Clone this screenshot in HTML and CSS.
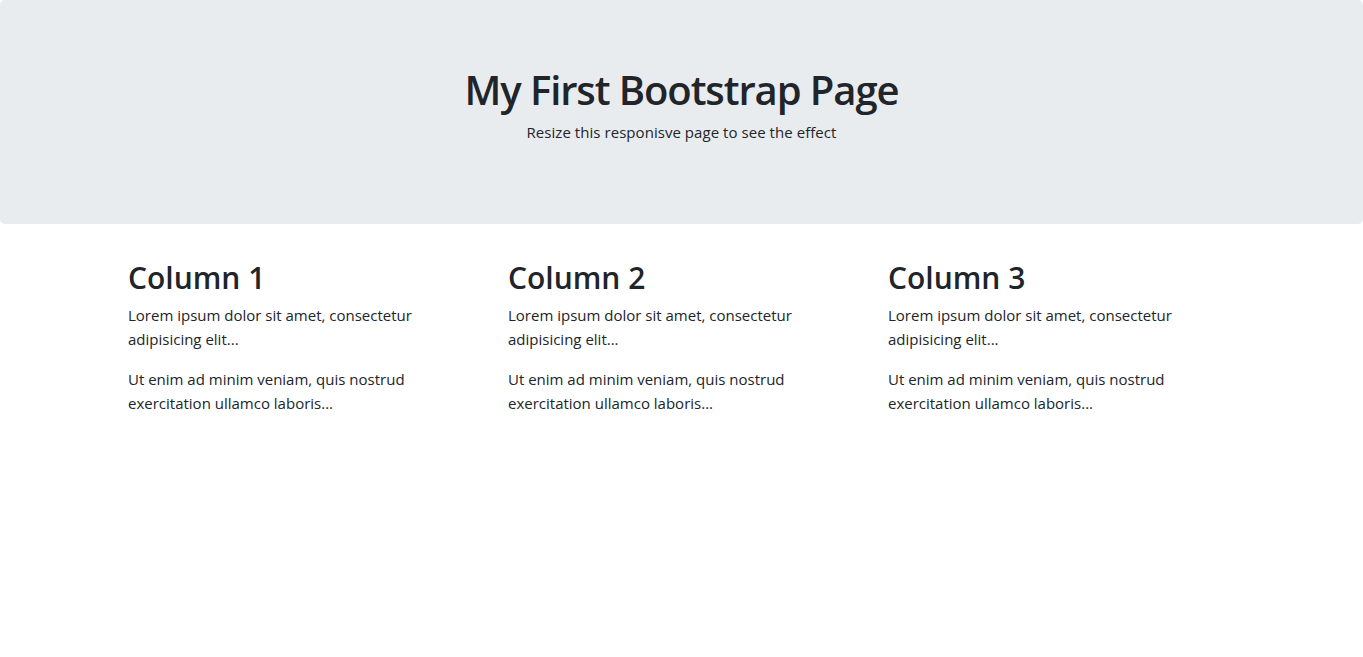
FILE: index.html
```html
<!DOCTYPE html>
<html lang="en">
<head>
<meta charset="utf-8">
<title>Bootstrap Example</title>
<link rel="stylesheet" href="styles.css">
</head>
<body>
<div class="jumbotron">
  <h1 class="title">My First Bootstrap Page</h1>
  <p class="lead-text">Resize this responisve page to see the effect</p>
</div>
<div class="container">
  <div class="row">
    <div class="col">
      <h3 class="col-title">Column 1</h3>
      <p class="text">Lorem ipsum dolor sit amet, consectetur adipisicing elit...</p>
      <p class="text">Ut enim ad minim veniam, quis nostrud exercitation ullamco laboris...</p>
    </div>
    <div class="col">
      <h3 class="col-title">Column 2</h3>
      <p class="text">Lorem ipsum dolor sit amet, consectetur adipisicing elit...</p>
      <p class="text">Ut enim ad minim veniam, quis nostrud exercitation ullamco laboris...</p>
    </div>
    <div class="col">
      <h3 class="col-title">Column 3</h3>
      <p class="text">Lorem ipsum dolor sit amet, consectetur adipisicing elit...</p>
      <p class="text">Ut enim ad minim veniam, quis nostrud exercitation ullamco laboris...</p>
    </div>
  </div>
</div>
</body>
</html>
```
FILE: styles.css
```css
* { box-sizing: border-box; }
body {
  margin: 0;
  font-family: "Open Sans", "Noto Sans", sans-serif;
  font-size: 16px;
  line-height: 1.5;
  color: #212529;
  background: #fff;
}
.jumbotron {
  background: #e9ecef;
  border-radius: 4.8px;
  padding: 64px 32px;
  margin-bottom: 32px;
  text-align: center;
}
.title {
  margin: 0 0 8px;
  font-size: 40px;
  font-weight: 600;
  line-height: 48px;
  letter-spacing: -1.1px;
  padding-top: 2px;
  height: 48px;
}
.lead-text {
  margin: 0 0 16px;
  padding-top: 1px;
  font-size: 15px;
  line-height: 23px;
  letter-spacing: 0.05px;
}
.container {
  max-width: 1140px;
  margin: 0 auto;
  padding: 0 15px;
  transform: translateX(1.5px);
}
.row {
  display: flex;
  margin: 0 -15px;
}
.col {
  flex: 0 0 33.3333%;
  padding: 0 15px;
}
.col-title {
  margin: 0 0 8px;
  font-size: 30px;
  font-weight: 600;
  line-height: 34px;
  padding-top: 5px;
}
.text {
  margin: 0 0 16px;
  font-size: 15px;
  line-height: 24px;
}
```
